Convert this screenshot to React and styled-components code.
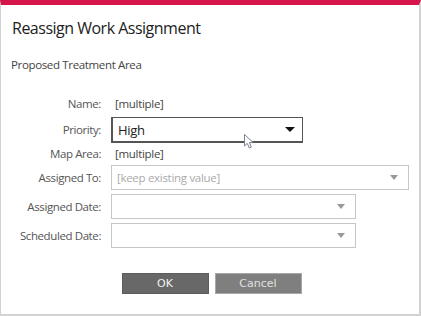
import React from "react";
import styled, { createGlobalStyle } from "styled-components";

const GlobalStyle = createGlobalStyle`
  html, body {
    margin: 0;
    padding: 0;
    background: #fff;
  }
  body {
    font-family: "Open Sans", "Liberation Sans", sans-serif;
  }
`;

const Dialog = styled.div`
  width: 421px;
  height: 316px;
  box-sizing: border-box;
  border-top: 5px solid #d4164a;
  border-left: 1px solid #d2d2d2;
  border-right: 2px solid #d2d2d2;
  border-bottom: 2px solid #d2d2d2;
  background: #fff;
  display: flex;
  flex-direction: column;
`;

const Title = styled.h1`
  margin: 0;
  padding: 12px 0 0 11px;
  height: 32px;
  font-size: 16px;
  font-weight: 400;
  color: #222;
  letter-spacing: -0.5px;
`;

const Subtitle = styled.div`
  padding: 8px 0 0 10px;
  height: 18px;
  font-size: 11.5px;
  color: #444;
  letter-spacing: -0.35px;
`;

const Form = styled.div`
  display: grid;
  grid-template-columns: 100px auto;
  column-gap: 10px;
  row-gap: 4px;
  margin-top: 20px;
  align-items: center;
`;

const Label = styled.label`
  text-align: right;
  font-size: 11.5px;
  color: #555;
  letter-spacing: -0.4px;
  line-height: ${({ h }) => h || 25}px;
`;

const Value = styled.div`
  font-size: 11.5px;
  color: #444;
  letter-spacing: -0.3px;
  padding-left: 4px;
  line-height: ${({ h }) => h || 18}px;
`;

const Select = styled.div`
  position: relative;
  box-sizing: border-box;
  width: ${({ w }) => w}px;
  height: ${({ h }) => h || 25}px;
  border: 1px solid ${({ dark }) => (dark ? "#555" : "#c6c6c6")};
  ${({ dark }) => dark && "border-width: 1px 1px 2px 2px;"}
  display: flex;
  align-items: center;
  justify-content: space-between;
  padding: 0 ${({ dark }) => (dark ? 7 : 10)}px 0 5px;
  font-size: ${({ dark }) => (dark ? 13 : 11.5)}px;
  letter-spacing: -0.3px;
  color: ${({ dark }) => (dark ? "#222" : "#aaa")};
  background: #fff;
`;

const Caret = styled.span`
  width: 0;
  height: 0;
  border-left: ${({ big }) => (big ? 5 : 4.5)}px solid transparent;
  border-right: ${({ big }) => (big ? 5 : 4.5)}px solid transparent;
  border-top: 5px solid ${({ big }) => (big ? "#111" : "#999")};
`;

const Cursor = styled.svg`
  position: absolute;
  left: 131px;
  top: 16px;
`;

const Buttons = styled.div`
  display: flex;
  justify-content: center;
  gap: 6px;
  margin-top: 25px;
  padding-left: 3px;
`;

const Button = styled.button`
  width: 87px;
  height: 21px;
  box-sizing: border-box;
  border: 1px solid ${({ primary }) => (primary ? "#5c5c5c" : "#a8a8a8")};
  background: ${({ primary }) => (primary ? "#686868" : "#7f7f7f")};
  color: ${({ primary }) => (primary ? "#f2f2f2" : "#e0e0e0")};
  font-family: "DejaVu Sans", sans-serif;
  font-size: 11px;
  padding: 0;
  cursor: pointer;
`;

const App = () => (
  <>
    <GlobalStyle />
    <Dialog>
      <Title>Reassign Work Assignment</Title>
      <Subtitle>Proposed Treatment Area</Subtitle>
      <Form>
        <Label h={18}>Name:</Label>
        <Value>[multiple]</Value>

        <Label h={26}>Priority:</Label>
        <Select w={192} h={26} dark>
          High
          <Caret big />
          <Cursor width="12" height="16" viewBox="0 0 12 16">
            <path
              d="M0.5 0.5 L0.5 12 L3.3 9.4 L5.3 14 L7.3 13.1 L5.4 8.6 L9.2 8.6 Z"
              fill="#fff"
              stroke="#7a8290"
              strokeWidth="1"
              strokeLinejoin="round"
            />
          </Cursor>
        </Select>

        <Label h={14}>Map Area:</Label>
        <Value h={14}>[multiple]</Value>

        <Label>Assigned To:</Label>
        <Select w={298}>
          [keep existing value]
          <Caret />
        </Select>

        <Label>Assigned Date:</Label>
        <Select w={245}>
          <span />
          <Caret />
        </Select>

        <Label>Scheduled Date:</Label>
        <Select w={245}>
          <span />
          <Caret />
        </Select>
      </Form>
      <Buttons>
        <Button primary>OK</Button>
        <Button>Cancel</Button>
      </Buttons>
    </Dialog>
  </>
);

export default App;
